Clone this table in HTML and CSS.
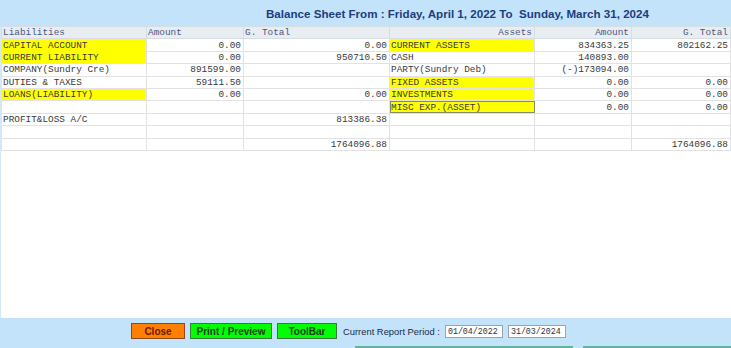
FILE: index.html
```html
<!DOCTYPE html>
<html>
<head>
<meta charset="utf-8">
<link rel="stylesheet" href="styles.css">
</head>
<body>
<div class="page">
  <div class="titlebar"><span class="title">Balance Sheet From : Friday, April 1, 2022 To &nbsp;Sunday, March 31, 2024</span></div>
  <div class="content">
    <table class="grid">
      <colgroup>
        <col class="c1"><col class="c2"><col class="c3"><col class="c4"><col class="c5"><col class="c6">
      </colgroup>
      <thead>
        <tr><th class="l">Liabilities</th><th class="l">Amount</th><th class="l">G. Total</th><th class="r">Assets</th><th class="r">Amount</th><th class="r">G. Total</th></tr>
      </thead>
      <tbody>
        <tr><td class="y">CAPITAL ACCOUNT</td><td class="r">0.00</td><td class="r">0.00</td><td class="y">CURRENT ASSETS</td><td class="r">834363.25</td><td class="r">802162.25</td></tr>
        <tr><td class="y">CURRENT LIABILITY</td><td class="r">0.00</td><td class="r">950710.50</td><td>CASH</td><td class="r">140893.00</td><td></td></tr>
        <tr><td>COMPANY(Sundry Cre)</td><td class="r">891599.00</td><td></td><td>PARTY(Sundry Deb)</td><td class="r">(-)173094.00</td><td></td></tr>
        <tr><td>DUTIES &amp; TAXES</td><td class="r">59111.50</td><td></td><td class="y">FIXED ASSETS</td><td class="r">0.00</td><td class="r">0.00</td></tr>
        <tr><td class="y">LOANS(LIABILITY)</td><td class="r">0.00</td><td class="r">0.00</td><td class="y">INVESTMENTS</td><td class="r">0.00</td><td class="r">0.00</td></tr>
        <tr><td></td><td></td><td></td><td class="y sel">MISC EXP.(ASSET)</td><td class="r">0.00</td><td class="r">0.00</td></tr>
        <tr><td>PROFIT&amp;LOSS A/C</td><td></td><td class="r">813386.38</td><td></td><td></td><td></td></tr>
        <tr><td></td><td></td><td></td><td></td><td></td><td></td></tr>
        <tr><td></td><td></td><td class="r">1764096.88</td><td></td><td></td><td class="r">1764096.88</td></tr>
      </tbody>
    </table>
  </div>
  <div class="footer">
    <div class="controls">
      <button class="btn close">Close</button>
      <button class="btn green">Print / Preview</button>
      <button class="btn green tb">ToolBar</button>
      <span class="label">Current Report Period :</span>
      <span class="date">01/04/2022</span>
      <span class="date">31/03/2024</span>
    </div>
    <div class="tabs">
      <div class="tab t1"></div>
      <div class="tab t2"></div>
    </div>
  </div>
</div>
</body>
</html>
```
FILE: styles.css
```css
html, body {
  margin: 0;
  padding: 0;
  width: 731px;
  height: 348px;
  overflow: hidden;
  background: #ffffff;
}
.page {
  display: flex;
  flex-direction: column;
  width: 731px;
  height: 348px;
}
.titlebar {
  height: 26px;
  background: #c3e3fb;
  display: flex;
  align-items: center;
  padding-left: 266px;
  box-sizing: border-box;
}
.title {
  font-family: "Liberation Sans", Arial, sans-serif;
  font-weight: bold;
  font-size: 11.6px;
  color: #1d3d7e;
  white-space: nowrap;
}
.content {
  flex: 1;
  background: #ffffff;
  border-left: 1px solid #d4e8f8;
}
.grid {
  border-collapse: collapse;
  table-layout: fixed;
  width: 729px;
  font-family: "Liberation Mono", "Courier New", monospace;
  font-size: 9.4px;
  color: #3a3a3a;
}
.c1 { width: 145px; }
.c2 { width: 97px; }
.c3 { width: 146px; }
.c4 { width: 145px; }
.c5 { width: 97px; }
.c6 { width: 99px; }
.grid tr { height: 12.4px; }
.grid th, .grid td {
  border: 1px solid #e2e2e2;
  padding: 0 2px 0 1px;
  height: 11.4px;
  line-height: 11px;
  white-space: nowrap;
  overflow: hidden;
  font-weight: normal;
}
.grid th {
  background: #e8edf2;
  color: #4a5680;
  border-color: #d8dde4;
}
.grid .l { text-align: left; }
.grid .r { text-align: right; }
.grid td.y { background: #ffff00; }
.grid td.sel { outline: 1px solid #8a8a60; outline-offset: -1px; }
.footer {
  height: 30px;
  background: #c3e3fb;
  display: flex;
  flex-direction: column;
}
.controls {
  display: flex;
  align-items: center;
  padding-left: 131px;
  padding-top: 5px;
  height: 16px;
}
.btn {
  height: 16px;
  margin: 0 5px 0 0;
  padding: 0;
  font-family: "Liberation Sans", Arial, sans-serif;
  font-weight: bold;
  font-size: 10px;
  border: 1px solid #5a5a40;
  box-sizing: border-box;
  cursor: default;
}
.close {
  width: 54px;
  background: #ff8000;
  color: #6a1a00;
  border-color: #8a4a20;
}
.green {
  width: 82px;
  background: #00ff00;
  color: #1a3a1a;
  border-color: #3a7a3a;
}
.green.tb { width: 60px; }
.label {
  font-family: "Liberation Sans", Arial, sans-serif;
  font-size: 9.4px;
  color: #1a2a4a;
  margin-left: 1px;
  margin-right: 5px;
}
.date {
  display: inline-block;
  width: 58px;
  height: 13px;
  box-sizing: border-box;
  border: 1px solid #9aa4b0;
  background: #ffffff;
  font-family: "Liberation Mono", "Courier New", monospace;
  font-size: 8.3px;
  line-height: 11px;
  padding-left: 2px;
  color: #333333;
  margin-right: 5px;
}
.tabs {
  display: flex;
  margin-top: 7px;
}
.tab {
  height: 10px;
  border-top: 2px solid #62b49c;
  background: #cfeede;
  box-sizing: border-box;
}
.t1 { width: 218px; margin-left: 355px; }
.t2 { width: 148px; margin-left: 10px; }
```
